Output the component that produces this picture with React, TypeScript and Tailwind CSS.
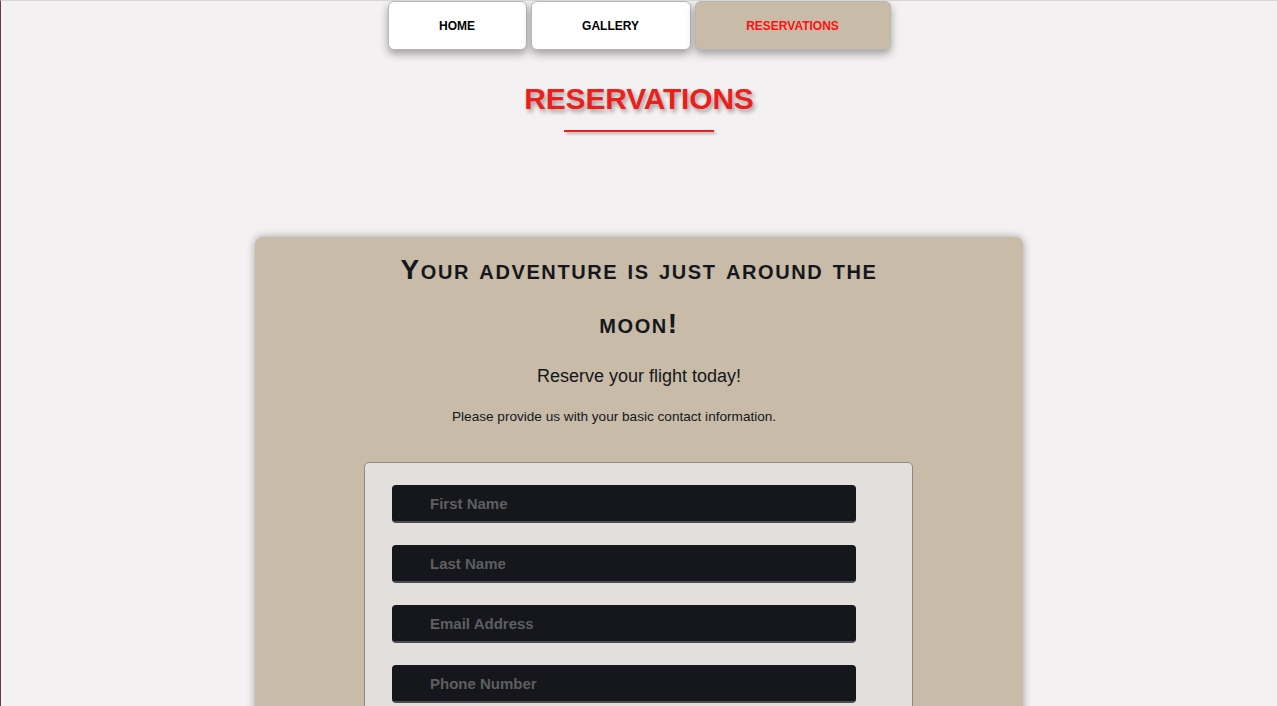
import React from "react";

const navItems = [
  { label: "HOME", w: "w-[139px]", active: false },
  { label: "GALLERY", w: "w-[160px]", active: false },
  { label: "RESERVATIONS", w: "w-[196px]", active: true },
];

const fields = ["First Name", "Last Name", "Email Address", "Phone Number"];

export default function App() {
  return (
    <main
      className="h-[706px] overflow-hidden bg-[#f3f1f2] border-l border-[#6b3a3a] border-t border-t-[#d8d6d7]"
      style={{ fontFamily: '"Liberation Sans", Arial, sans-serif' }}
    >
      {/* top nav */}
      <nav className="flex justify-center gap-[4px]">
        {navItems.map((n) => (
          <button
            key={n.label}
            className={`${n.w} h-[49px] rounded-[6px] border border-[#b9b6b4] text-[12px] font-bold shadow-[0_4px_8px_rgba(0,0,0,0.35)] ${
              n.active ? "bg-[#c8bba8] text-[#ff1010]" : "bg-white text-black"
            }`}
          >
            {n.label}
          </button>
        ))}
      </nav>

      <h1 className="mt-[31px] text-center text-[30px] leading-[36px] font-bold text-[#ec1f1c] tracking-[-0.2px] [text-shadow:2px_3px_4px_rgba(0,0,0,0.35)]">
        RESERVATIONS
      </h1>
      <div className="mt-[13px] ml-[563px] h-[2px] w-[150px] bg-[#ec1f1c] shadow-[2px_2px_3px_rgba(0,0,0,0.3)]" />

      {/* reservation card */}
      <section className="mx-auto mt-[105px] w-[768px] rounded-t-[8px] bg-[#c8bba8] pt-[6px] shadow-[0_0_8px_rgba(0,0,0,0.35)] pb-10">
        <h2 className="mx-auto w-[500px] text-center text-[28px] leading-[54px] font-bold text-[#15171c] tracking-[1.6px] [font-variant:small-caps]">
          Your adventure is just around the moon!
        </h2>
        <p className="mt-[13px] text-center text-[18px] leading-[24px] text-[#15171c]">
          Reserve your flight today!
        </p>
        <p className="mt-[19px] pl-[197px] text-[13.6px] leading-[20px] text-[#15171c]">
          Please provide us with your basic contact information.
        </p>

        <div className="mt-[35px] ml-[109px] w-[549px] rounded-[5px] border border-[#8c8884] bg-[#e2dfdd] pl-[27px] pt-[22px] pb-6">
          <div className="flex flex-col gap-[22px]">
            {fields.map((f) => (
              <input
                key={f}
                placeholder={f}
                className="h-[38px] w-[464px] rounded-[4px] border-b-2 border-[#4b4d53] bg-[#15171c] pl-[38px] text-[15px] font-bold text-[#cccccc] placeholder:text-[#5e5f61] outline-none"
              />
            ))}
          </div>
        </div>
      </section>
    </main>
  );
}
